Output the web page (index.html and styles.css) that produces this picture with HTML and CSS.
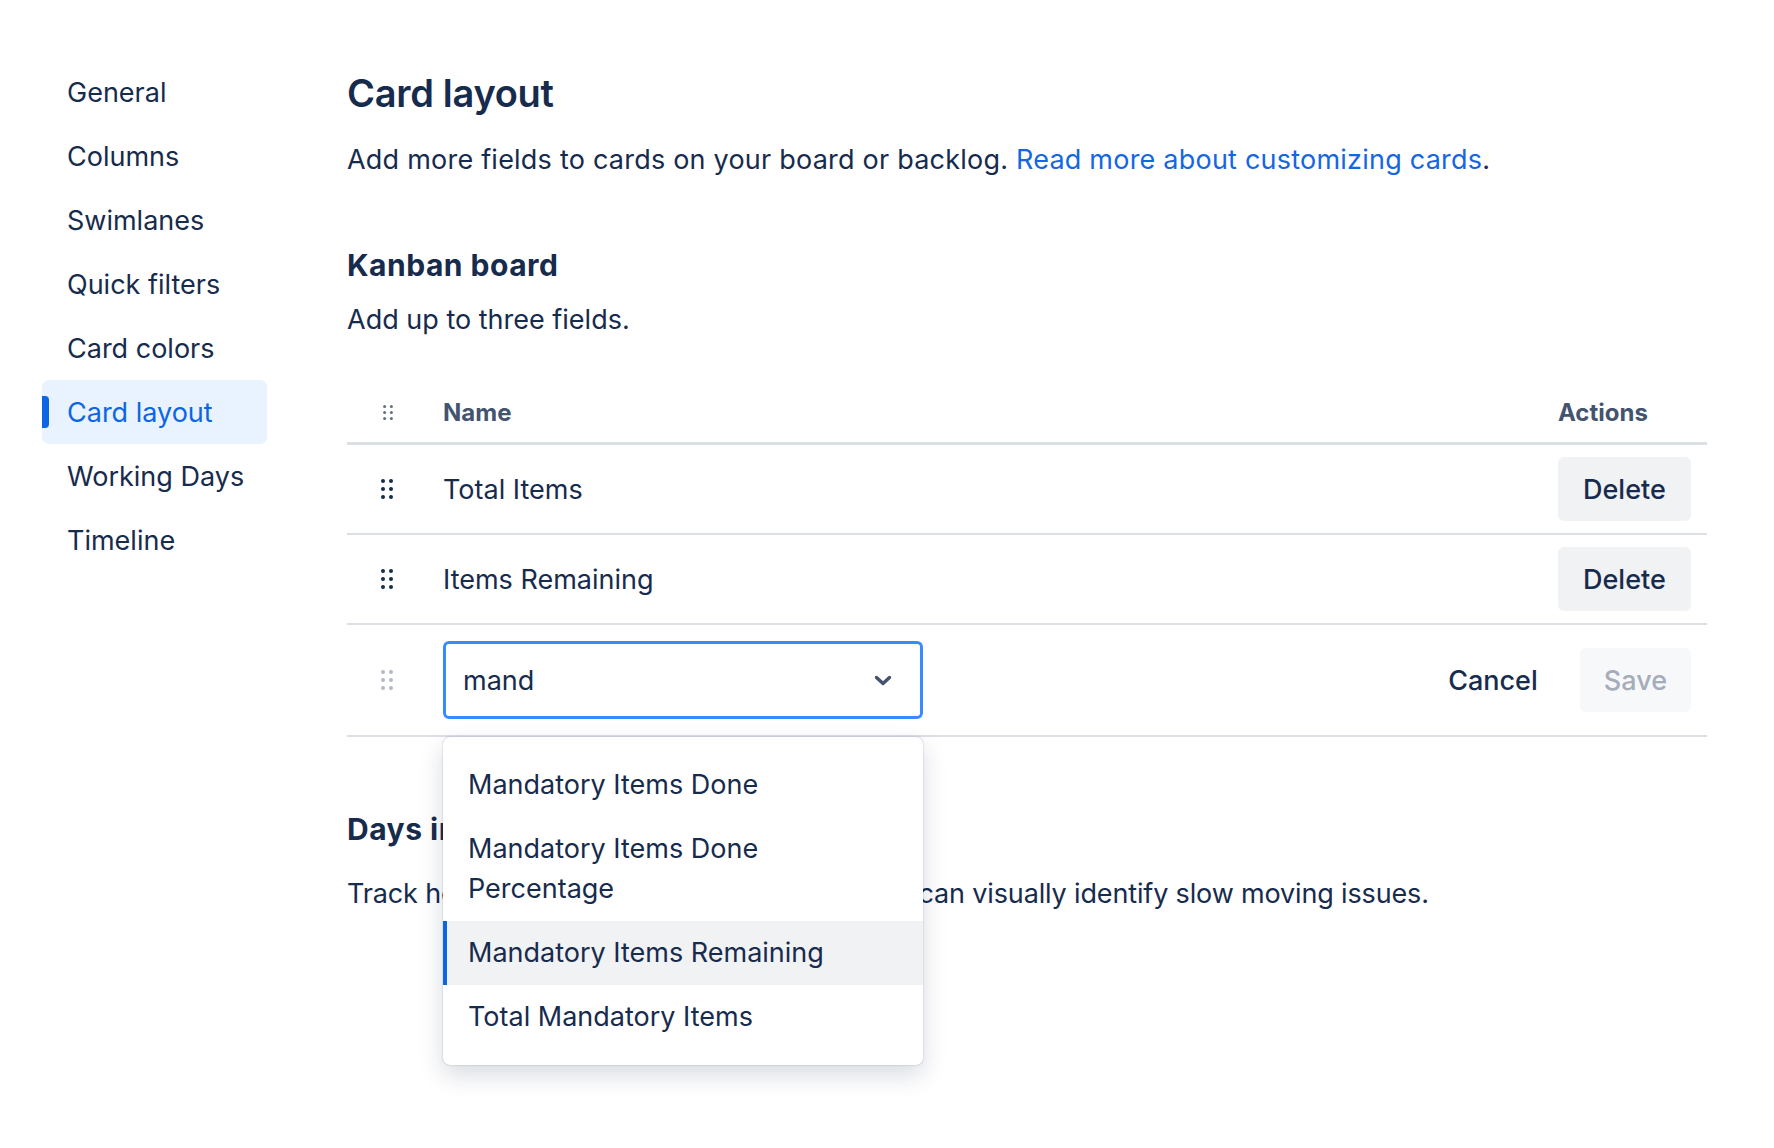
FILE: index.html
```html
<!DOCTYPE html>
<html lang="en">
<head>
<meta charset="utf-8">
<title>Card layout</title>
<link rel="stylesheet" href="styles.css">
</head>
<body>
<div class="page">
  <nav class="sidebar">
    <a class="nav-item">General</a>
    <a class="nav-item">Columns</a>
    <a class="nav-item">Swimlanes</a>
    <a class="nav-item">Quick filters</a>
    <a class="nav-item">Card colors</a>
    <a class="nav-item active">Card layout</a>
    <a class="nav-item">Working Days</a>
    <a class="nav-item">Timeline</a>
  </nav>
  <main class="content">
    <h1 class="title">Card layout</h1>
    <p class="lead">Add more fields to cards on your board or backlog. <a class="link">Read more about customizing cards</a>.</p>

    <h2 class="section-title">Kanban board</h2>
    <p class="section-desc">Add up to three fields.</p>

    <div class="table">
      <div class="row head">
        <div class="cell drag">
          <svg class="grip-small" width="10" height="15" viewBox="0 0 10 15"><circle cx="1.6" cy="1.6" r="1.5"/><circle cx="8.4" cy="1.6" r="1.5"/><circle cx="1.6" cy="7.5" r="1.5"/><circle cx="8.4" cy="7.5" r="1.5"/><circle cx="1.6" cy="13.4" r="1.5"/><circle cx="8.4" cy="13.4" r="1.5"/></svg>
        </div>
        <div class="cell name">Name</div>
        <div class="cell actions">Actions</div>
      </div>
      <div class="row">
        <div class="cell drag">
          <svg class="grip" width="12" height="20" viewBox="0 0 12 20"><circle cx="2" cy="2" r="2"/><circle cx="10" cy="2" r="2"/><circle cx="2" cy="10" r="2"/><circle cx="10" cy="10" r="2"/><circle cx="2" cy="18" r="2"/><circle cx="10" cy="18" r="2"/></svg>
        </div>
        <div class="cell name">Total Items</div>
        <div class="cell actions"><button class="btn">Delete</button></div>
      </div>
      <div class="row">
        <div class="cell drag">
          <svg class="grip" width="12" height="20" viewBox="0 0 12 20"><circle cx="2" cy="2" r="2"/><circle cx="10" cy="2" r="2"/><circle cx="2" cy="10" r="2"/><circle cx="10" cy="10" r="2"/><circle cx="2" cy="18" r="2"/><circle cx="10" cy="18" r="2"/></svg>
        </div>
        <div class="cell name">Items Remaining</div>
        <div class="cell actions"><button class="btn">Delete</button></div>
      </div>
      <div class="row edit">
        <div class="cell drag">
          <svg class="grip muted" width="12" height="20" viewBox="0 0 12 20"><circle cx="2" cy="2" r="2"/><circle cx="10" cy="2" r="2"/><circle cx="2" cy="10" r="2"/><circle cx="10" cy="10" r="2"/><circle cx="2" cy="18" r="2"/><circle cx="10" cy="18" r="2"/></svg>
        </div>
        <div class="cell name">
          <div class="select-wrap">
            <div class="select">
              <span class="select-value">mand</span>
              <svg class="chevron" width="18" height="11" viewBox="0 0 18 11"><path d="M2.5 2.5 L9 8.5 L15.5 2.5" fill="none" stroke="#44546F" stroke-width="3.4" stroke-linecap="round" stroke-linejoin="round"/></svg>
            </div>
            <ul class="menu">
              <li class="menu-item">Mandatory Items Done</li>
              <li class="menu-item">Mandatory Items Done Percentage</li>
              <li class="menu-item selected">Mandatory Items Remaining</li>
              <li class="menu-item">Total Mandatory Items</li>
            </ul>
          </div>
        </div>
        <div class="cell actions edit-actions">
          <button class="btn subtle">Cancel</button>
          <button class="btn disabled">Save</button>
        </div>
      </div>
    </div>

    <h2 class="section-title days">Days in column</h2>
    <p class="section-desc days-desc">Track how long issues are in columns so you can visually identify slow moving issues.</p>
  </main>
</div>
</body>
</html>
```
FILE: styles.css
```css
* { box-sizing: border-box; }

html, body {
  min-height: 100%;
}

body {
  margin: 0;
  background: #ffffff;
  font-family: Inter, "Noto Sans", "Liberation Sans", sans-serif;
  color: #172B4D;
}

.page {
  display: flex;
  align-items: flex-start;
  min-height: 100vh;
}

.sidebar {
  display: flex;
  flex-direction: column;
  width: 225px;
  margin-left: 42px;
  padding-top: 60px;
}

.nav-item {
  position: relative;
  display: flex;
  align-items: center;
  height: 64px;
  padding-left: 25px;
  font-size: 27px;
  color: #172B4D;
  border-radius: 7px;
}

.nav-item.active {
  background: #E9F2FF;
  color: #0C66E4;
}

.nav-item.active::before {
  content: "";
  position: absolute;
  left: 0;
  top: 16px;
  width: 7px;
  height: 32px;
  background: #0C66E4;
  border-radius: 0 4px 4px 0;
}

.content {
  flex: 1;
  margin-left: 80px;
  margin-right: 67px;
  padding-top: 70px;
}

.title {
  margin: 0;
  font-size: 38px;
  line-height: 46px;
  font-weight: 600;
  letter-spacing: -0.3px;
}

.lead {
  margin: 24px 0 0;
  font-size: 27px;
  line-height: 40px;
  letter-spacing: 0.22px;
}

.link {
  color: #1466E2;
}

.section-title {
  margin: 65px 0 0;
  font-size: 30px;
  line-height: 40px;
  font-weight: 700;
  letter-spacing: 0.5px;
}

.section-desc {
  margin: 15px 0 0;
  font-size: 27px;
  line-height: 40px;
}

.table {
  margin-top: 44px;
}

.row {
  display: flex;
  align-items: center;
  height: 90px;
  border-bottom: 2px solid #DCDFE4;
}

.row.head {
  height: 61px;
  padding-bottom: 2px;
  border-bottom: 3px solid #DCDFE4;
}

.row.edit {
  height: 112px;
}

.cell.drag {
  width: 96px;
  flex: none;
  display: flex;
  align-items: center;
  padding-left: 34px;
}

.grip { fill: #172B4D; }
.grip.muted { fill: #B3B9C4; }
.grip-small { fill: #626F86; margin-left: 2px; }

.cell.name {
  flex: 1;
  font-size: 27px;
}

.row.head .cell {
  font-size: 24px;
  font-weight: 700;
  color: #44546F;
}

.cell.actions {
  width: 149px;
  flex: none;
  padding-right: 16px;
}

.edit-actions {
  display: flex;
  justify-content: flex-end;
  align-items: center;
  gap: 17px;
  width: 400px !important;
}

.btn {
  height: 64px;
  padding: 0 25px;
  border: none;
  border-radius: 6px;
  background: #F1F2F4;
  font-family: inherit;
  font-size: 27px;
  font-weight: 500;
  color: #172B4D;
  cursor: pointer;
}

.btn.subtle {
  background: transparent;
}

.btn.disabled {
  padding: 0 24px;
  background: #F7F8F9;
  color: #A5ADBA;
}

.select-wrap {
  position: relative;
  width: 480px;
}

.select {
  display: flex;
  align-items: center;
  justify-content: space-between;
  height: 78px;
  padding: 0 28px 0 17px;
  border: 3px solid #388BFF;
  border-radius: 6px;
}

.select-value {
  font-size: 27px;
}

.menu {
  position: absolute;
  left: 0;
  top: 96px;
  width: 480px;
  margin: 0;
  padding: 16px 0 16px;
  list-style: none;
  background: #ffffff;
  border-radius: 7px;
  box-shadow: 0 10px 24px rgba(9, 30, 66, 0.16), 0 0 1.5px rgba(9, 30, 66, 0.35);
  z-index: 5;
}

.menu-item {
  padding: 12px 60px 12px 21px;
  font-size: 27px;
  line-height: 40px;
  border-left: 4px solid transparent;
}

.menu-item.selected {
  background: #F1F2F4;
  border-left-color: #0C66E4;
}

.section-title.days {
  margin-top: 72px;
}

.days-desc {
  margin-top: 25px;
  letter-spacing: -0.15px;
}
```
